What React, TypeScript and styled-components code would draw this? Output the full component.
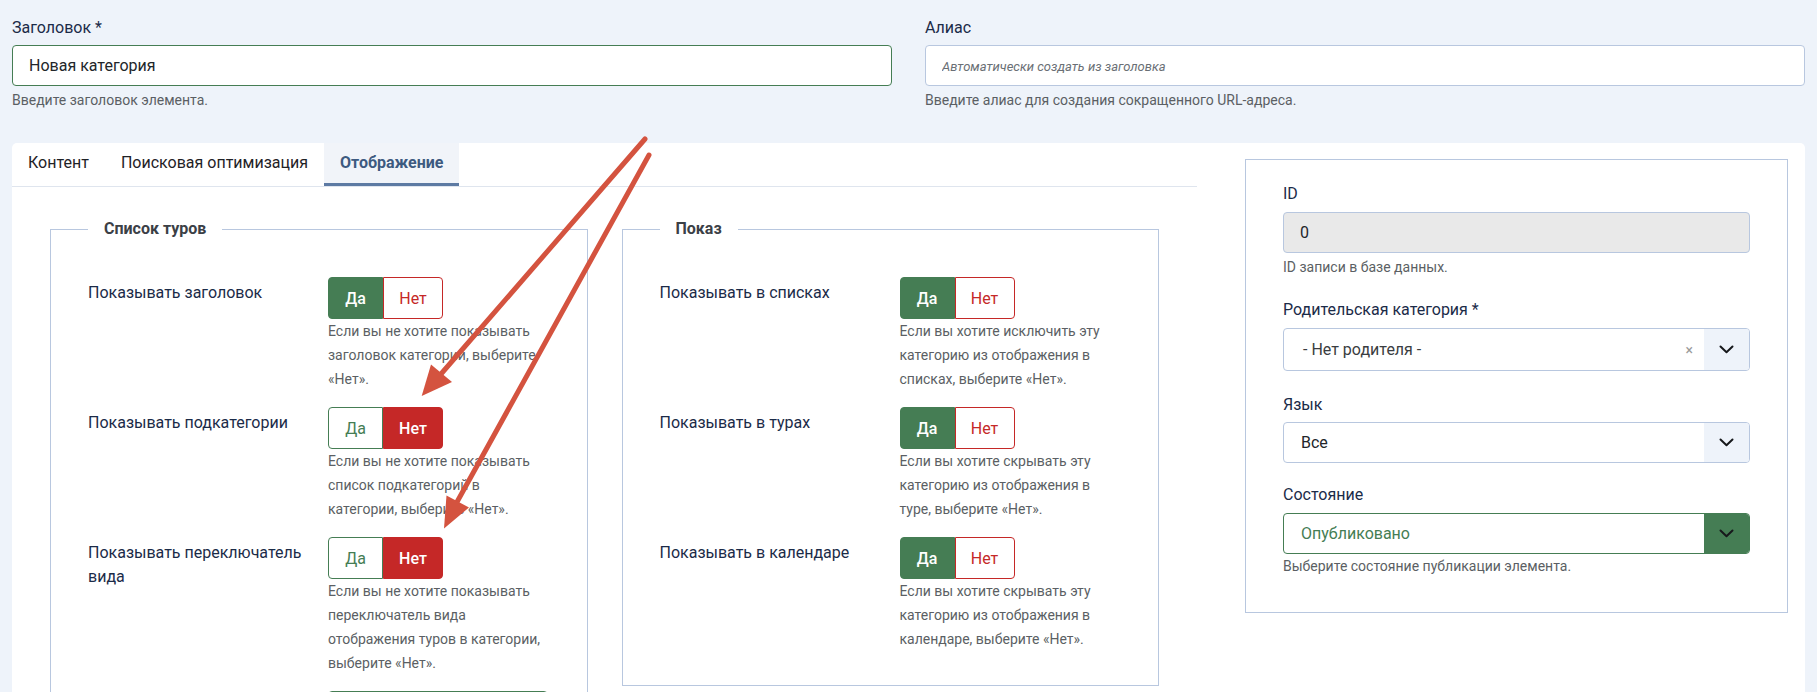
import React from 'react';
import styled, { createGlobalStyle } from 'styled-components';

const GlobalStyle = createGlobalStyle`
  html, body {
    margin: 0;
    padding: 0;
    overflow: hidden;
    background: #eef3fa;
  }
  body {
    font-family: Roboto, "Noto Sans", Arial, sans-serif;
    color: #22262a;
  }
  * { box-sizing: border-box; }
`;

const Page = styled.div`
  position: relative;
  width: 1817px;
  height: 692px;
  overflow: hidden;
  padding: 16px 12px 0 12px;
`;

const TopGrid = styled.div`
  display: grid;
  grid-template-columns: 1fr 1fr;
  column-gap: 33px;
`;

const Field = styled.div`
  display: flex;
  flex-direction: column;
`;

const Label = styled.label<{ $mb?: number }>`
  font-size: 16px;
  line-height: 24px;
  color: #1b2b48;
  margin-bottom: ${p => (p.$mb ?? 5)}px;
`;

const TextInput = styled.input<{ $valid?: boolean; $disabled?: boolean }>`
  height: 41px;
  width: 100%;
  border: 1px solid ${p => (p.$valid ? '#457d54' : '#b8c7df')};
  border-radius: 4px;
  background: ${p => (p.$disabled ? '#e9e9e9' : '#fff')};
  padding: 0 16px;
  font-family: inherit;
  font-size: 16px;
  color: #22262a;
  outline: none;
  &::placeholder {
    font-style: italic;
    font-size: 13px;
    color: #6a6f75;
  }
`;

const Help = styled.div<{ $mt?: number }>`
  font-size: 14px;
  line-height: 20px;
  color: #5b5f64;
  margin-top: ${p => (p.$mt ?? 4)}px;
`;

const Card = styled.div`
  margin-top: 33px;
  background: #fff;
  border-radius: 5px 5px 0 0;
  display: flex;
  align-items: flex-start;
  padding-right: 17px;
  min-height: 600px;
`;

const Main = styled.div`
  width: 1185px;
  flex: none;
`;

const TabBar = styled.div`
  display: flex;
  border-bottom: 1px solid #dfe5ee;
`;

const Tab = styled.div<{ $active?: boolean }>`
  padding: 8px 16px;
  font-size: 16px;
  line-height: 24px;
  border-bottom: 3px solid ${p => (p.$active ? '#5d7aa3' : 'transparent')};
  background: ${p => (p.$active ? '#f1f4f9' : 'transparent')};
  font-weight: ${p => (p.$active ? 700 : 400)};
  color: ${p => (p.$active ? '#3d5a80' : '#1f2226')};
`;

const TabContent = styled.div`
  padding: 30px 38px 0 38px;
  display: grid;
  grid-template-columns: 1fr 1fr;
  column-gap: 34px;
  align-items: start;
`;

const Fieldset = styled.fieldset`
  margin: 0;
  min-width: 0;
  border: 1px solid #b8c7df;
  padding: 36px 37px 34px 37px;
`;

const Legend = styled.legend`
  padding: 0 16px;
  font-size: 16px;
  line-height: 24px;
  font-weight: 700;
  color: #3b4046;
`;

const Row = styled.div`
  display: grid;
  grid-template-columns: 240px 1fr;
  margin-bottom: 16px;
  &:last-child { margin-bottom: 0; }
`;

const RowLabel = styled.div`
  padding-top: 4px;
  padding-right: 22px;
  font-size: 16px;
  line-height: 24px;
  color: #1b2b48;
`;

const Control = styled.div`
  display: flex;
  flex-direction: column;
  align-items: flex-start;
`;

const Toggle = styled.div`
  display: inline-flex;
  height: 42px;
`;

const Segment = styled.div<{ $w: number; $color: string; $active: boolean; $side: 'l' | 'r' }>`
  width: ${p => p.$w}px;
  height: 42px;
  display: flex;
  align-items: center;
  justify-content: center;
  font-size: 16px;
  font-weight: ${p => (p.$active ? 500 : 400)};
  border: 1px solid ${p => p.$color};
  background: ${p => (p.$active ? p.$color : '#fff')};
  color: ${p => (p.$active ? '#fff' : p.$color)};
  border-radius: ${p => (p.$side === 'l' ? '4px 0 0 4px' : '0 4px 4px 0')};
`;

const RowHelp = styled.div`
  font-size: 14px;
  line-height: 24px;
  color: #5b5f64;
  width: 218px;
`;

const GreenBox = styled.div`
  width: 220px;
  height: 41px;
  border: 1px solid #457d54;
  border-radius: 4px;
`;

const Side = styled.div`
  width: 543px;
  flex: none;
  margin-left: 48px;
  margin-top: 16px;
  border: 1px solid #b8c7df;
  padding: 22px 37px 36px 37px;
  display: flex;
  flex-direction: column;
`;

const Group = styled.div<{ $mb?: number }>`
  display: flex;
  flex-direction: column;
  margin-bottom: ${p => (p.$mb ?? 0)}px;
`;

const Select = styled.div<{ $green?: boolean; $h?: number }>`
  display: flex;
  height: ${p => p.$h ?? 41}px;
  border: 1px solid ${p => (p.$green ? '#457d54' : '#b8c7df')};
  border-radius: 4px;
  overflow: hidden;
  background: #fff;
`;

const SelectValue = styled.div<{ $tone?: 'green' | 'muted'; $pl?: number }>`
  flex: 1;
  display: flex;
  align-items: center;
  padding-left: ${p => p.$pl ?? 16}px;
  font-size: 16px;
  color: ${p => (p.$tone === 'green' ? '#457d54' : p.$tone === 'muted' ? '#3a3d41' : '#22262a')};
`;

const ClearMark = styled.span`
  display: flex;
  align-items: center;
  padding: 0 11px;
  font-size: 14px;
  color: #9a9a9a;
`;

const SelectButton = styled.div<{ $green?: boolean }>`
  width: 45px;
  flex: none;
  display: flex;
  align-items: center;
  justify-content: center;
  background: ${p => (p.$green ? '#457d54' : '#eef3fa')};
`;

const ArrowLayer = styled.svg`
  position: absolute;
  left: 0;
  top: 0;
  pointer-events: none;
`;

const Chevron = () => (
  <svg width="15" height="9" viewBox="0 0 15 9">
    <path d="M1.5 1.5 L7.5 7.3 L13.5 1.5" fill="none" stroke="#16181b" strokeWidth="2" strokeLinecap="round" strokeLinejoin="round" />
  </svg>
);

type ToggleProps = { yes: boolean };
const YesNo = ({ yes }: ToggleProps) => (
  <Toggle>
    <Segment $w={55} $color="#457d54" $active={yes} $side="l">Да</Segment>
    <Segment $w={60} $color="#c52827" $active={!yes} $side="r">Нет</Segment>
  </Toggle>
);

type RowData = { label: string; yes: boolean; help: string };

const leftRows: RowData[] = [
  { label: 'Показывать заголовок', yes: true, help: 'Если вы не хотите показывать заголовок категории, выберите «Нет».' },
  { label: 'Показывать подкатегории', yes: false, help: 'Если вы не хотите показывать список подкатегорий в категории, выберите «Нет».' },
  { label: 'Показывать переключатель вида', yes: false, help: 'Если вы не хотите показывать переключатель вида отображения туров в категории, выберите «Нет».' },
];

const rightRows: RowData[] = [
  { label: 'Показывать в списках', yes: true, help: 'Если вы хотите исключить эту категорию из отображения в списках, выберите «Нет».' },
  { label: 'Показывать в турах', yes: true, help: 'Если вы хотите скрывать эту категорию из отображения в туре, выберите «Нет».' },
  { label: 'Показывать в календаре', yes: true, help: 'Если вы хотите скрывать эту категорию из отображения в календаре, выберите «Нет».' },
];

const ToggleRow = ({ r }: { r: RowData }) => (
  <Row>
    <RowLabel>{r.label}</RowLabel>
    <Control>
      <YesNo yes={r.yes} />
      <RowHelp>{r.help}</RowHelp>
    </Control>
  </Row>
);

const ARROW = '#d4533f';

export default function App() {
  return (
    <>
      <GlobalStyle />
      <Page>
        <TopGrid>
          <Field>
            <Label>Заголовок *</Label>
            <TextInput $valid defaultValue="Новая категория" />
            <Help>Введите заголовок элемента.</Help>
          </Field>
          <Field>
            <Label>Алиас</Label>
            <TextInput placeholder="Автоматически создать из заголовка" />
            <Help>Введите алиас для создания сокращенного URL-адреса.</Help>
          </Field>
        </TopGrid>

        <Card>
          <Main>
            <TabBar>
              <Tab>Контент</Tab>
              <Tab>Поисковая оптимизация</Tab>
              <Tab $active>Отображение</Tab>
            </TabBar>
            <TabContent>
              <Fieldset>
                <Legend>Список туров</Legend>
                {leftRows.map(r => <ToggleRow key={r.label} r={r} />)}
                <Row>
                  <RowLabel />
                  <Control>
                    <GreenBox />
                  </Control>
                </Row>
              </Fieldset>
              <Fieldset>
                <Legend>Показ</Legend>
                {rightRows.map(r => <ToggleRow key={r.label} r={r} />)}
              </Fieldset>
            </TabContent>
          </Main>

          <Side>
            <Group $mb={21}>
              <Label $mb={6}>ID</Label>
              <TextInput $disabled readOnly defaultValue="0" />
              <Help>ID записи в базе данных.</Help>
            </Group>
            <Group $mb={22}>
              <Label $mb={6}>Родительская категория *</Label>
              <Select $h={43}>
                <SelectValue $tone="muted" $pl={19}>- Нет родителя -</SelectValue>
                <ClearMark>×</ClearMark>
                <SelectButton><Chevron /></SelectButton>
              </Select>
            </Group>
            <Group $mb={20}>
              <Label $mb={5}>Язык</Label>
              <Select>
                <SelectValue $pl={17}>Все</SelectValue>
                <SelectButton><Chevron /></SelectButton>
              </Select>
            </Group>
            <Group>
              <Label $mb={6}>Состояние</Label>
              <Select $green>
                <SelectValue $tone="green" $pl={17}>Опубликовано</SelectValue>
                <SelectButton $green><Chevron /></SelectButton>
              </Select>
              <Help $mt={2}>Выберите состояние публикации элемента.</Help>
            </Group>
          </Side>
        </Card>

        <ArrowLayer width="1817" height="692" viewBox="0 0 1817 692">
          <line x1="645" y1="139" x2="441" y2="374" stroke={ARROW} strokeWidth="5" strokeLinecap="round" />
          <polygon points="421.7,396 452,382 431,364.5" fill={ARROW} />
          <line x1="649" y1="155" x2="457" y2="502" stroke={ARROW} strokeWidth="5" strokeLinecap="round" />
          <polygon points="444,528.5 469,507.5 446.5,495.5" fill={ARROW} />
        </ArrowLayer>
      </Page>
    </>
  );
}
